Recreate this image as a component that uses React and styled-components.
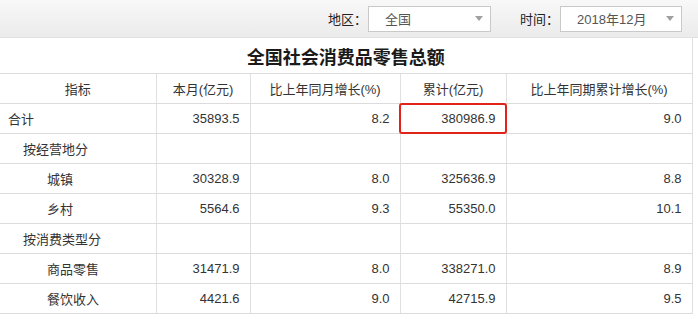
import React from "react";
import styled, { createGlobalStyle } from "styled-components";

const GlobalStyle = createGlobalStyle`
  body {
    margin: 0;
    background: #fff;
    font-family: "Liberation Sans", "Noto Sans CJK SC", sans-serif;
    color: #333;
  }
`;

const columns = [
  { label: "指标", width: 156 },
  { label: "本月(亿元)", width: 94 },
  { label: "比上年同月增长(%)", width: 150 },
  { label: "累计(亿元)", width: 106 },
  { label: "比上年同期累计增长(%)", width: 186 },
];

const rows = [
  { name: "合计", level: 0, values: ["35893.5", "8.2", "380986.9", "9.0"], mark: 2 },
  { name: "按经营地分", level: 1, values: ["", "", "", ""] },
  { name: "城镇", level: 2, values: ["30328.9", "8.0", "325636.9", "8.8"] },
  { name: "乡村", level: 2, values: ["5564.6", "9.3", "55350.0", "10.1"] },
  { name: "按消费类型分", level: 1, values: ["", "", "", ""] },
  { name: "商品零售", level: 2, values: ["31471.9", "8.0", "338271.0", "8.9"] },
  { name: "餐饮收入", level: 2, values: ["4421.6", "9.0", "42715.9", "9.5"] },
];

const indents = [8, 23, 47];

const Page = styled.div`
  width: 698px;
`;

const Toolbar = styled.div`
  height: 37px;
  display: flex;
  align-items: center;
  justify-content: flex-end;
  padding-right: 16px;
  gap: 29px;
  background: linear-gradient(#f8f8f8, #ebebeb);
  border-bottom: 1px solid #e2e2e2;
`;

const Filter = styled.div`
  display: flex;
  align-items: center;
  gap: 1px;
`;

const Label = styled.span`
  font-size: 13px;
  color: #222;
`;

const Select = styled.div`
  box-sizing: border-box;
  width: ${(p) => p.$width}px;
  height: 26px;
  display: flex;
  align-items: center;
  justify-content: space-between;
  padding: 0 7px 0 16px;
  background: #fff;
  border: 1px solid #c9c9c9;
  font-size: 13px;
  color: #555;
`;

const Caret = styled.span`
  width: 0;
  height: 0;
  border-left: 4px solid transparent;
  border-right: 4px solid transparent;
  border-top: 5px solid #a0a0a0;
`;

const Table = styled.table`
  width: 692px;
  border-collapse: collapse;
  table-layout: fixed;
  font-size: 13px;
`;

const TitleCell = styled.th`
  height: 35px;
  padding: 0;
  font-family: "Noto Sans CJK SC", sans-serif;
  font-size: 18px;
  font-weight: 700;
  color: #1a1a1a;
  border-right: 1px solid #e0e0e0;
  border-bottom: 1px solid #dcdcdc;
`;

const HeadCell = styled.th`
  height: 29px;
  padding: 0;
  font-weight: 400;
  color: #333;
  text-align: center;
  border-right: 1px solid #e0e0e0;
  border-bottom: 1px solid #dcdcdc;
`;

const NameCell = styled.td`
  height: 29px;
  padding: 0 0 0 ${(p) => indents[p.$level]}px;
  color: #333;
  border-right: 1px solid #e0e0e0;
  border-bottom: 1px solid #dcdcdc;
`;

const NumCell = styled.td`
  position: relative;
  height: 29px;
  padding: 0 10px 0 0;
  text-align: right;
  color: #333;
  border-right: 1px solid #e0e0e0;
  border-bottom: 1px solid #dcdcdc;

  ${(p) =>
    p.$marked &&
    `
    &::after {
      content: "";
      position: absolute;
      left: -2px;
      top: -1px;
      right: -1px;
      bottom: -1px;
      border: 2px solid #e2231a;
      border-radius: 3px;
    }
  `}
`;

export default function App() {
  return (
    <Page>
      <GlobalStyle />
      <Toolbar>
        <Filter>
          <Label>地区：</Label>
          <Select $width={123}>
            全国
            <Caret />
          </Select>
        </Filter>
        <Filter>
          <Label>时间：</Label>
          <Select $width={122}>
            2018年12月
            <Caret />
          </Select>
        </Filter>
      </Toolbar>
      <Table>
        <colgroup>
          {columns.map((c) => (
            <col key={c.label} style={{ width: c.width }} />
          ))}
        </colgroup>
        <thead>
          <tr>
            <TitleCell colSpan={5}>全国社会消费品零售总额</TitleCell>
          </tr>
          <tr>
            {columns.map((c) => (
              <HeadCell key={c.label}>{c.label}</HeadCell>
            ))}
          </tr>
        </thead>
        <tbody>
          {rows.map((r) => (
            <tr key={r.name}>
              <NameCell $level={r.level}>{r.name}</NameCell>
              {r.values.map((v, i) => (
                <NumCell key={i} $marked={r.mark === i}>
                  {v}
                </NumCell>
              ))}
            </tr>
          ))}
        </tbody>
      </Table>
    </Page>
  );
}
